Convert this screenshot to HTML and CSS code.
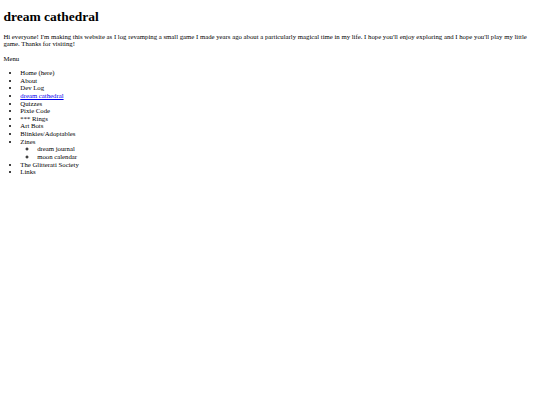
FILE: index.html
```html
<!DOCTYPE html>
<html lang="en">
<head>
<meta charset="utf-8">
<title>dream cathedral</title>
<link rel="stylesheet" href="styles.css">
</head>
<body>
<h1 class="title">dream cathedral</h1>
<p class="intro">Hi everyone! I'm making this website as I log revamping a small game I made years ago about a particularly magical time in my life. I hope you'll enjoy exploring and I hope you'll play my little game. Thanks for visiting!</p>
<p class="menu-label">Menu</p>
<ul class="menu">
  <li>Home (here)</li>
  <li>About</li>
  <li>Dev Log</li>
  <li><a href="#">dream cathedral</a></li>
  <li>Quizzes</li>
  <li>Pixie Code</li>
  <li>*** Rings</li>
  <li>Art Bots</li>
  <li>Blinkies/Adoptables</li>
  <li>Zines
    <ul class="submenu">
      <li>dream journal</li>
      <li>moon calendar</li>
    </ul>
  </li>
  <li>The Glitterati Society</li>
  <li>Links</li>
</ul>
</body>
</html>
```
FILE: styles.css
```css
html {
  background: #fff;
}
body {
  margin: 3.4px;
  font-family: "Liberation Serif", "Times New Roman", serif;
  font-size: 6.75px;
  line-height: 7.62px;
  color: #000;
}
.title {
  font-size: 13.5px;
  line-height: 15.5px;
  font-weight: bold;
  margin: 5.8px 0 8px;
}
.intro,
.menu-label {
  margin: 6.75px 0;
}
.menu {
  margin: 6.75px 0;
  padding-left: 16.9px;
  list-style: disc;
}
.submenu {
  margin: 0;
  padding-left: 16.9px;
  list-style: circle;
}
a {
  color: #0000ee;
  text-decoration: underline;
}
```
